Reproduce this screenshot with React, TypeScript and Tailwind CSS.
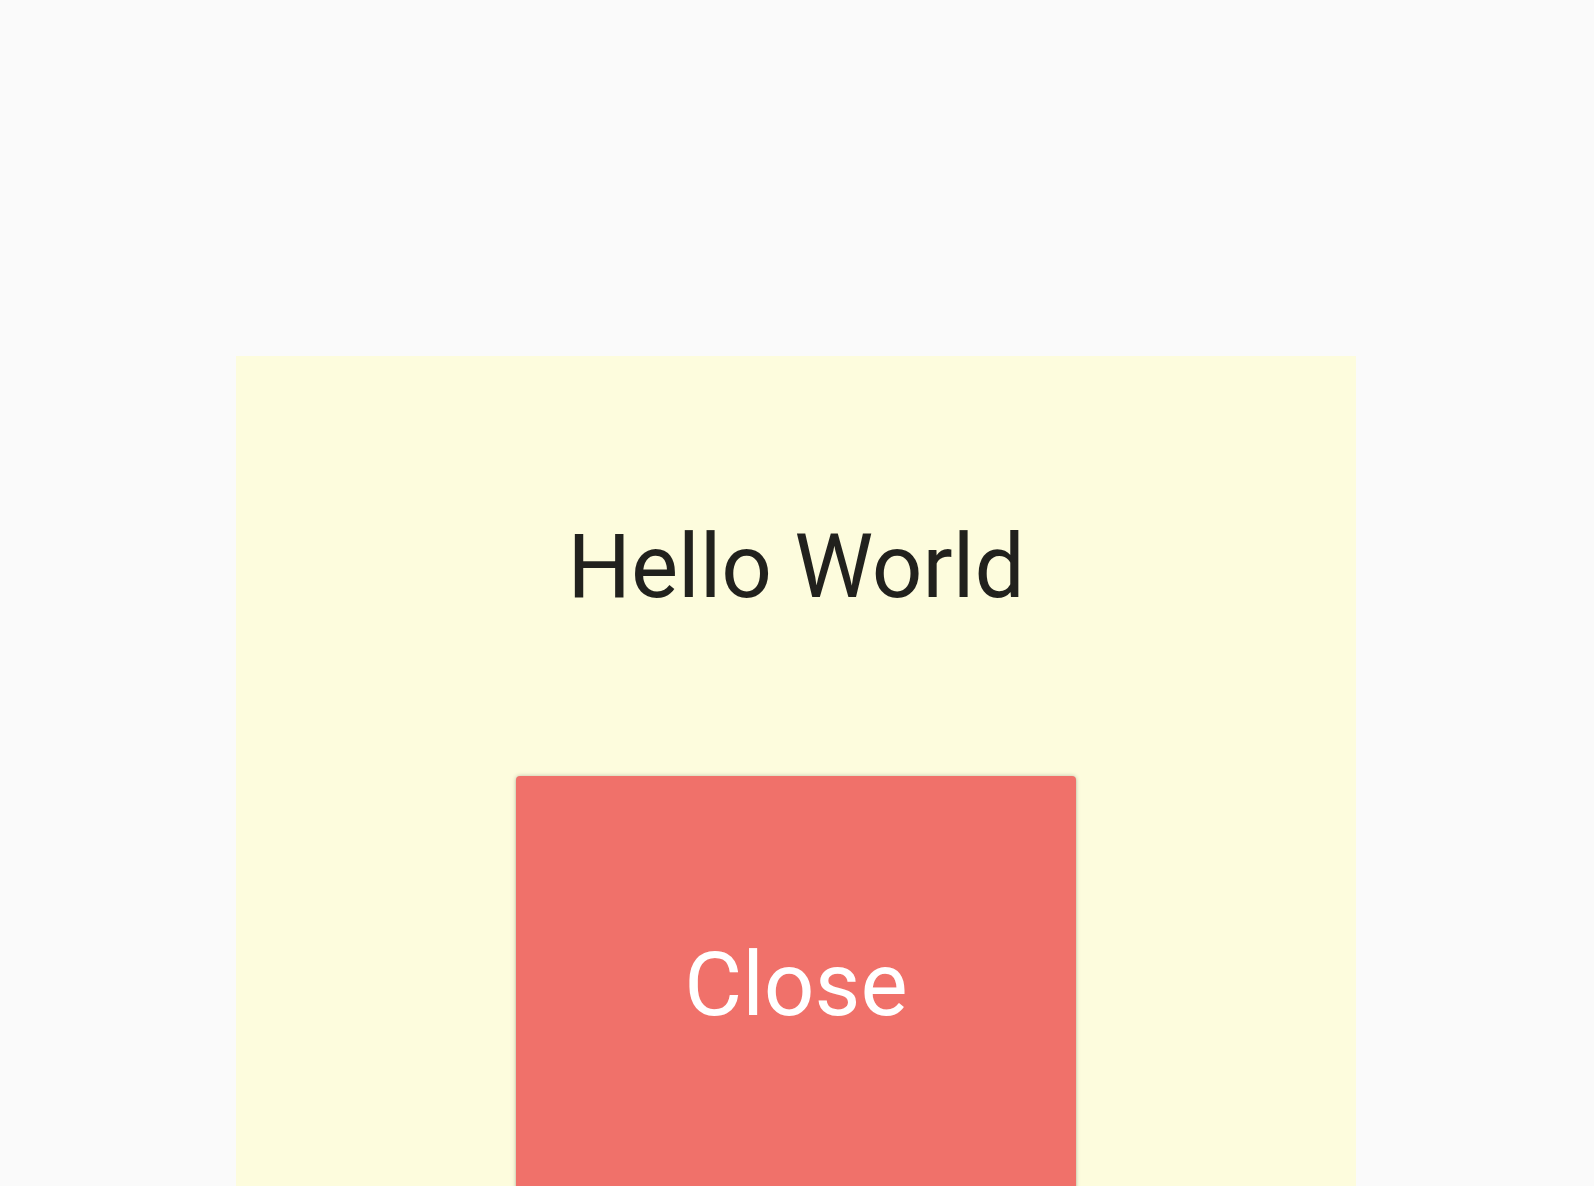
import React from "react";

function App() {
  return (
    <div className="h-[1186px] w-full overflow-hidden bg-[#fafafa] font-['Roboto',sans-serif]">
      <div className="ml-[236px] mt-[356px] flex h-[900px] w-[1120px] flex-col items-center bg-[#fdfcdd] pt-[144px]">
        <h1 className="text-[89px] font-normal leading-normal text-[rgba(0,0,0,0.87)]">
          Hello World
        </h1>
        <button className="mt-[142px] flex h-[418px] w-[560px] shrink-0 items-center justify-center rounded-[4px] bg-[#f0716a] text-[89px] leading-normal text-white shadow-[0_3px_1px_-2px_rgba(0,0,0,0.2),0_2px_2px_0_rgba(0,0,0,0.14),0_0_4px_0_rgba(0,0,0,0.25)]">
          Close
        </button>
      </div>
    </div>
  );
}

export default App;
